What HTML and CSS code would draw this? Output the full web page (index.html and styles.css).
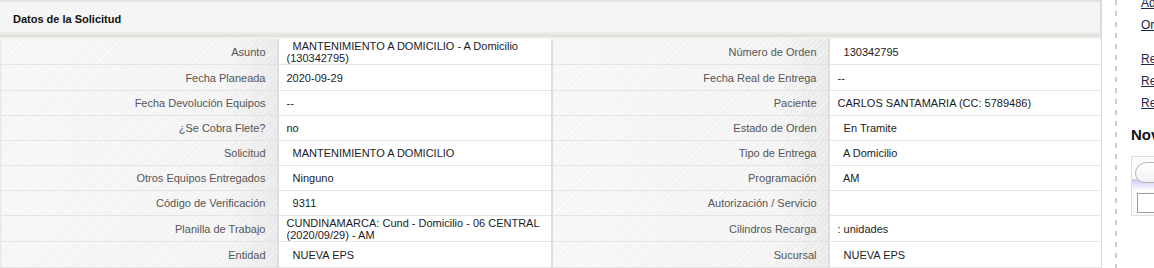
FILE: index.html
```html
<!DOCTYPE html>
<html lang="es">
<head>
<meta charset="utf-8">
<title>Datos de la Solicitud</title>
<link rel="stylesheet" href="styles.css">
</head>
<body>
<div class="page">
  <div class="main">
    <div class="panel">
      <div class="panel-head">Datos de la Solicitud</div>
      <table class="details">
        <colgroup>
          <col class="c-lbl"><col class="c-val"><col class="c-lbl"><col class="c-val2">
        </colgroup>
        <tr class="tall">
          <td class="lbl">Asunto</td>
          <td class="val">&nbsp; MANTENIMIENTO A DOMICILIO - A Domicilio (130342795)</td>
          <td class="lbl">Número de Orden</td>
          <td class="val last">&nbsp; 130342795</td>
        </tr>
        <tr>
          <td class="lbl">Fecha Planeada</td>
          <td class="val">2020-09-29</td>
          <td class="lbl">Fecha Real de Entrega</td>
          <td class="val last">--</td>
        </tr>
        <tr>
          <td class="lbl">Fecha Devolución Equipos</td>
          <td class="val">--</td>
          <td class="lbl">Paciente</td>
          <td class="val last">CARLOS SANTAMARIA (CC: 5789486)</td>
        </tr>
        <tr>
          <td class="lbl">¿Se Cobra Flete?</td>
          <td class="val">no</td>
          <td class="lbl">Estado de Orden</td>
          <td class="val last">&nbsp; En Tramite</td>
        </tr>
        <tr>
          <td class="lbl">Solicitud</td>
          <td class="val">&nbsp; MANTENIMIENTO A DOMICILIO</td>
          <td class="lbl">Tipo de Entrega</td>
          <td class="val last">&nbsp; A Domicilio</td>
        </tr>
        <tr>
          <td class="lbl">Otros Equipos Entregados</td>
          <td class="val">&nbsp; Ninguno</td>
          <td class="lbl">Programación</td>
          <td class="val last">&nbsp; AM</td>
        </tr>
        <tr>
          <td class="lbl">Código de Verificación</td>
          <td class="val">&nbsp; 9311</td>
          <td class="lbl">Autorización / Servicio</td>
          <td class="val last"></td>
        </tr>
        <tr class="tall">
          <td class="lbl">Planilla de Trabajo</td>
          <td class="val">CUNDINAMARCA: Cund - Domicilio - 06 CENTRAL (2020/09/29) - AM</td>
          <td class="lbl">Cilindros Recarga</td>
          <td class="val last">: unidades</td>
        </tr>
        <tr>
          <td class="lbl">Entidad</td>
          <td class="val">&nbsp; NUEVA EPS</td>
          <td class="lbl">Sucursal</td>
          <td class="val last">&nbsp; NUEVA EPS</td>
        </tr>
      </table>
    </div>
  </div>
  <div class="divider"></div>
  <aside class="side">
    <ul class="links">
      <li><a href="#">Adjuntar Documentos</a></li>
      <li><a href="#">Orden de Servicio</a></li>
      <li class="gap"><a href="#">Reprogramar</a></li>
      <li><a href="#">Registrar Novedad</a></li>
      <li><a href="#">Regresar</a></li>
    </ul>
    <h3 class="side-title">Novedades</h3>
    <div class="nov-box">
      <div class="bubble"></div>
      <div class="band"></div>
      <div class="field"></div>
    </div>
  </aside>
</div>
</body>
</html>
```

FILE: styles.css
```css
html, body {
  margin: 0;
  padding: 0;
  background: #ffffff;
  overflow: hidden;
}

body {
  font-family: "Liberation Sans", Arial, sans-serif;
  font-size: 11px;
  color: #1e1e1e;
}

.page {
  display: flex;
  width: 1154px;
  height: 268px;
  overflow: hidden;
}

.main {
  flex: 0 0 1102px;
  width: 1102px;
}

.panel {
  border-right: 2px solid #dcdcdc;
  height: 268px;
  box-sizing: border-box;
}

.panel-head {
  border-top: 2px solid #e2e2e2;
  height: 35px;
  box-sizing: content-box;
  border-bottom: 2px solid #f1f1f1;
  background: linear-gradient(to bottom, #f5f5f5 0, #f5f5f5 29px, #ebebe7 31px, #dcdcd9 35px);
  font-weight: bold;
  font-size: 11px;
  color: #111111;
  line-height: 35px;
  padding-left: 13px;
}

.details {
  width: 1100px;
  border-collapse: collapse;
  table-layout: fixed;
}

.c-lbl { width: 277px; }
.c-val { width: 274px; }
.c-val2 { width: 272px; }

.details td {
  height: 24px;
  padding: 0;
  line-height: 12px;
  vertical-align: middle;
  border-bottom: 1px solid #e4e4e4;
}

.details tr.tall td {
  height: 25px;
}

.details tr.tall + tr td {
  height: 25px;
}

.lbl {
  text-align: right;
  color: #555555;
  padding-right: 11px !important;
  border-right: 2px solid #dedede;
  background:
    repeating-linear-gradient(135deg, rgba(255,255,255,0.55) 0 1px, rgba(255,255,255,0) 1px 4px),
    linear-gradient(to right, #f5f5f5 0%, #f3f3f3 80%, #e8e8e8 100%);
}

.details td.lbl:first-child {
  border-left: 1px solid #e6e6e6;
}

.val {
  background: #ffffff;
  color: #1c1c24;
  padding-left: 8px !important;
  padding-right: 6px !important;
  border-right: 2px solid #dedede;
}

.val.last {
  border-right: none;
}

.divider {
  flex: 0 0 2px;
  margin-left: 13px;
  height: 268px;
  background: repeating-linear-gradient(to bottom, #cccccc 0 5px, transparent 5px 11px);
}

.side {
  flex: 0 0 auto;
  padding-left: 14px;
  white-space: nowrap;
  font-size: 12px;
}

.links {
  list-style: none;
  margin: -8px 0 0 0;
  padding: 0 0 0 10px;
}

.links li {
  line-height: 22px;
  height: 22px;
}

.links li.gap {
  margin-top: 12px;
}

.links a {
  color: #23284a;
  text-decoration: underline;
}

.side-title {
  margin: 12px 0 0 0;
  font-size: 15px;
  font-weight: bold;
  color: #111111;
  line-height: 18px;
}

.nov-box {
  margin-top: 12px;
  width: 60px;
  height: 58px;
  border: 1px solid #dddddd;
  background: #fbfbfb;
  position: relative;
}

.bubble {
  position: absolute;
  left: 3px;
  top: 5px;
  width: 60px;
  height: 19px;
  border: 1px solid #b5b5b5;
  border-radius: 12px 12px 10px 10px;
  background: linear-gradient(to bottom, #ffffff, #f2f2f2);
}

.band {
  margin-top: 22px;
  height: 12px;
  background: linear-gradient(to bottom, #c9c9f3, #ffffff);
}

.field {
  margin: 2px 0 0 5px;
  width: 60px;
  height: 18px;
  border: 1px solid #9c9c9c;
  background: #ffffff;
}
```
